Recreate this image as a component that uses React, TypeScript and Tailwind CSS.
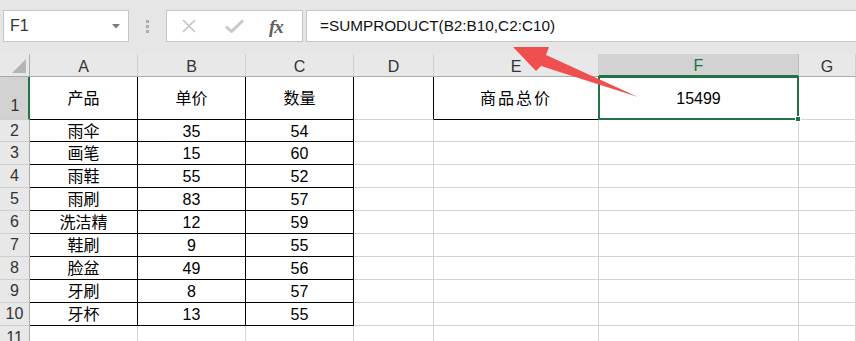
import React from "react";

const cols = ["A", "B", "C", "D", "E", "F", "G"];

const rows: [string, string, string][] = [
  ["雨伞", "35", "54"],
  ["画笔", "15", "60"],
  ["雨鞋", "55", "52"],
  ["雨刷", "83", "57"],
  ["洗洁精", "12", "59"],
  ["鞋刷", "9", "55"],
  ["脸盆", "49", "56"],
  ["牙刷", "8", "57"],
  ["牙杯", "13", "55"],
];

const font = { fontFamily: '"Liberation Sans", "Noto Sans CJK SC", sans-serif' };

function Cell({
  children,
  right = "gray",
  bottom = "gray",
}: {
  children?: React.ReactNode;
  right?: "gray" | "black";
  bottom?: "gray" | "black";
}) {
  return (
    <div
      className={`flex items-center justify-center pt-[2px] border-r border-b text-[16px] text-black bg-white ${
        right === "black" ? "border-r-black" : "border-r-[#d4d4d4]"
      } ${bottom === "black" ? "border-b-black" : "border-b-[#d4d4d4]"}`}
    >
      {children}
    </div>
  );
}

function RowHead({ n, selected }: { n: number; selected?: boolean }) {
  return (
    <div
      className={`flex justify-center text-[16px] text-[#333] border-b border-b-[#cfcfcf] ${
        selected
          ? "bg-[#d2d2d2] border-r-2 border-r-[#217346] items-end pb-[1px] pl-[2px]"
          : "bg-[#e8e8e8] border-r border-r-[#ababab] items-center"
      }`}
    >
      {n}
    </div>
  );
}

function Toolbar() {
  return (
    <div className="h-[54px] shrink-0 bg-[#e6e6e6] flex items-start pt-[10px] pl-[3px]">
      {/* name box */}
      <div className="w-[126px] h-[32px] bg-white border border-[#c6c6c6] flex items-center justify-between pl-[6px] pr-[8px]">
        <span className="text-[16px] text-[#333]">F1</span>
        <svg width="8" height="5" viewBox="0 0 8 5">
          <path d="M0 0 H8 L4 4.5 Z" fill="#7a7a7a" />
        </svg>
      </div>
      <div className="w-[37px] h-[32px] flex flex-col items-center justify-center gap-[2px]">
        <span className="w-[3px] h-[3px] bg-[#adadad]" />
        <span className="w-[3px] h-[3px] bg-[#adadad]" />
        <span className="w-[3px] h-[3px] bg-[#adadad]" />
      </div>
      {/* cancel / enter / function */}
      <div className="w-[137px] h-[32px] bg-white border border-[#c6c6c6] flex items-center pl-[14px]">
        <svg width="16" height="16" viewBox="0 0 16 16">
          <path d="M2 2 L14 14 M14 2 L2 14" stroke="#c3c3c3" strokeWidth="1.6" fill="none" />
        </svg>
        <svg className="ml-[28px]" width="19" height="14" viewBox="0 0 19 14">
          <path d="M1 7.5 L6.5 12.5 L18 1.5" stroke="#c8c8c8" strokeWidth="3" fill="none" />
        </svg>
        <span
          className="ml-[25px] text-[19px] italic font-bold text-[#5e5e5e] leading-none tracking-[-1px]"
          style={{ fontFamily: '"Liberation Serif", serif' }}
        >
          fx
        </span>
      </div>
      {/* formula input */}
      <div className="ml-[3px] flex-1 h-[32px] bg-white border border-r-0 border-[#c6c6c6] flex items-center pl-[13px]">
        <span className="text-[15.3px] text-[#111]">=SUMPRODUCT(B2:B10,C2:C10)</span>
      </div>
    </div>
  );
}

export default function App() {
  return (
    <div className="relative w-[856px] h-[341px] overflow-hidden bg-white flex flex-col" style={font}>
      <Toolbar />
      <div className="flex-1 min-h-0 grid grid-cols-[30px_108px_108px_108px_80px_165px_200px_1fr] grid-rows-[23px_43px_22px_repeat(8,23px)_1fr]">
        {/* column headers */}
        <div className="bg-[#e8e8e8] border-r border-r-[#ababab] border-b border-b-[#ababab] flex items-end justify-end pr-[3px] pb-[3px]">
          <svg width="14" height="14" viewBox="0 0 14 14">
            <path d="M14 0 V14 H0 Z" fill="#b5b5b5" />
          </svg>
        </div>
        {cols.map((c) =>
          c === "F" ? (
            <div
              key={c}
              className="bg-[#d2d2d2] border-r border-r-[#bdbdbd] border-b-2 border-b-[#217346] flex items-center justify-center pt-[3px] text-[16px] text-[#217346]"
            >
              {c}
            </div>
          ) : (
            <div
              key={c}
              className="bg-[#e8e8e8] border-r border-r-[#d0d0d0] border-b border-b-[#ababab] flex items-center justify-center pt-[3px] text-[16px] text-[#333]"
            >
              {c}
            </div>
          )
        )}

        {/* row 1 */}
        <RowHead n={1} selected />
        <Cell right="black" bottom="black">产品</Cell>
        <Cell right="black" bottom="black">单价</Cell>
        <Cell right="black" bottom="black">数量</Cell>
        <Cell right="black" />
        <Cell bottom="black">
          <span className="tracking-[2px]">商品总价</span>
        </Cell>
        <div className="relative flex items-center justify-center pt-[2px] border-r border-b border-[#d4d4d4] text-[16px] text-black bg-white">
          15499
          <div className="absolute -inset-[1px] border-2 border-[#217346]" />
          <div className="absolute -right-[3px] -bottom-[3px] w-[6px] h-[6px] bg-[#217346] border border-white" />
        </div>
        <Cell />

        {/* data rows */}
        {rows.map(([name, price, qty], i) => (
          <React.Fragment key={name}>
            <RowHead n={i + 2} />
            <Cell right="black" bottom="black">{name}</Cell>
            <Cell right="black" bottom="black">{price}</Cell>
            <Cell right="black" bottom="black">{qty}</Cell>
            <Cell />
            <Cell />
            <Cell />
            <Cell />
          </React.Fragment>
        ))}

        {/* row 11, cut off */}
        <RowHead n={11} />
        <Cell />
        <Cell />
        <Cell />
        <Cell />
        <Cell />
        <Cell />
        <Cell />
      </div>

      {/* callout arrow pointing at the formula */}
      <svg className="absolute left-0 top-0 pointer-events-none" width="856" height="341" viewBox="0 0 856 341">
        <polygon points="513,47 549,47 546,55 638,97 541,66 536,71" fill="#f04f4f" />
      </svg>
    </div>
  );
}
